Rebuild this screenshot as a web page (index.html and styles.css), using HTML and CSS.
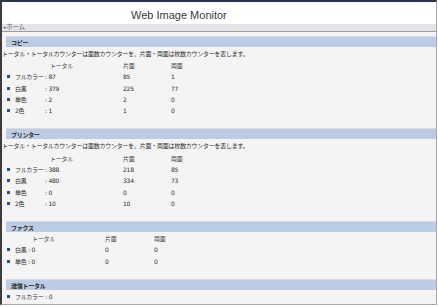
FILE: index.html
```html
<!DOCTYPE html>
<html lang="ja">
<head>
<meta charset="utf-8">
<title>Web Image Monitor</title>
<link rel="stylesheet" href="styles.css">
</head>
<body>
<div class="window">
  <header class="top">
    <div class="title">Web Image Monitor</div>
  </header>
  <nav class="crumb"><span class="arrow">◂</span>ホーム</nav>
  <main class="content">
    <section class="sec">
      <h2 class="band">コピー</h2>
      <p class="desc">トータル・トータルカウンターは面数カウンターを、片面・両面は枚数カウンターを表します。</p>
      <div class="tbl four">
        <div class="cell"></div><div class="cell th th-total">トータル</div><div class="cell th">片面</div><div class="cell th">両面</div>
        <div class="cell lbl"><i class="sq"></i>フルカラー</div><div class="cell">: 87</div><div class="cell">85</div><div class="cell">1</div>
        <div class="cell lbl"><i class="sq"></i>白黒</div><div class="cell">: 379</div><div class="cell">225</div><div class="cell">77</div>
        <div class="cell lbl"><i class="sq"></i>単色</div><div class="cell">: 2</div><div class="cell">2</div><div class="cell">0</div>
        <div class="cell lbl"><i class="sq"></i>2色</div><div class="cell">: 1</div><div class="cell">1</div><div class="cell">0</div>
      </div>
    </section>
    <section class="sec">
      <h2 class="band">プリンター</h2>
      <p class="desc">トータル・トータルカウンターは面数カウンターを、片面・両面は枚数カウンターを表します。</p>
      <div class="tbl four">
        <div class="cell"></div><div class="cell th th-total">トータル</div><div class="cell th">片面</div><div class="cell th">両面</div>
        <div class="cell lbl"><i class="sq"></i>フルカラー</div><div class="cell">: 388</div><div class="cell">218</div><div class="cell">85</div>
        <div class="cell lbl"><i class="sq"></i>白黒</div><div class="cell">: 480</div><div class="cell">334</div><div class="cell">73</div>
        <div class="cell lbl"><i class="sq"></i>単色</div><div class="cell">: 0</div><div class="cell">0</div><div class="cell">0</div>
        <div class="cell lbl"><i class="sq"></i>2色</div><div class="cell">: 10</div><div class="cell">10</div><div class="cell">0</div>
      </div>
    </section>
    <section class="sec">
      <h2 class="band">ファクス</h2>
      <div class="tbl three">
        <div class="cell th th-fax">トータル</div><div class="cell th">片面</div><div class="cell th">両面</div>
        <div class="cell lbl"><i class="sq"></i>白黒 : 0</div><div class="cell">0</div><div class="cell">0</div>
        <div class="cell lbl"><i class="sq"></i>単色 : 0</div><div class="cell">0</div><div class="cell">0</div>
      </div>
    </section>
    <section class="sec">
      <h2 class="band">送信トータル</h2>
      <div class="tbl one">
        <div class="cell lbl"><i class="sq"></i>フルカラー : 0</div>
        <div class="cell lbl"><i class="sq"></i>白黒 : 0</div>
      </div>
    </section>
  </main>
</div>
</body>
</html>
```
FILE: styles.css
```css
html, body {
  margin: 0;
  padding: 0;
  background: #ffffff;
}
body {
  width: 438px;
  height: 307px;
  overflow: hidden;
}
.window {
  box-sizing: border-box;
  width: 437px;
  height: 305px;
  border-top: 2px solid #2a3152;
  border-left: 2px solid #3c3c40;
  border-right: 1px solid #a8a8a8;
  border-bottom: 1px solid #a8a8a8;
  overflow: hidden;
  background: #f4f4f4;
  font-family: "DejaVu Sans", "Noto Sans CJK JP", sans-serif;
  font-size: 6px;
  letter-spacing: -0.25px;
  color: #2e2e2e;
}
.top {
  background: #fff;
  height: 22px;
  display: flex;
  align-items: center;
  padding-left: 129px;
}
.title {
  font-family: "Liberation Sans", Arial, sans-serif;
  font-size: 11px;
  letter-spacing: 0;
  color: #3a3a3a;
  padding-top: 4px;
}
.crumb {
  height: 7px;
  line-height: 7px;
  background: #e4e4e8;
  border-bottom: 1px solid #9c9c9c;
  font-size: 6.5px;
  color: #5a6070;
  padding-left: 1px;
}
.arrow {
  font-size: 5px;
  margin-right: 1px;
}
.content {
  padding-top: 4px;
}
.sec {
  padding-bottom: 12px;
}
.band {
  margin: 0 0 1px 4px;
  height: 11px;
  line-height: 11px;
  background: #bccde3;
  border-top: 1px solid #d3dded;
  box-sizing: border-box;
  font-size: 6px;
  font-weight: bold;
  padding-left: 5px;
  color: #2a2a2a;
}
.desc {
  margin: 0;
  line-height: 12px;
  height: 12px;
  white-space: nowrap;
}
.tbl {
  display: grid;
  margin-left: 5px;
  grid-auto-rows: 11.3px;
  align-items: center;
}
.tbl.four {
  grid-template-columns: 38px 78px 48px 1fr;
}
.tbl.three {
  grid-template-columns: 98px 49px 1fr;
}
.tbl.one {
  grid-template-columns: 1fr;
}
.cell {
  white-space: nowrap;
  line-height: 11px;
}
.th {
  color: #444;
}
.th-total {
  padding-left: 5px;
}
.th-fax {
  padding-left: 25px;
}
.lbl {
  display: flex;
  align-items: center;
}
.sq {
  display: inline-block;
  width: 3px;
  height: 3px;
  background: #2c4c8e;
  margin-right: 5px;
}
```
